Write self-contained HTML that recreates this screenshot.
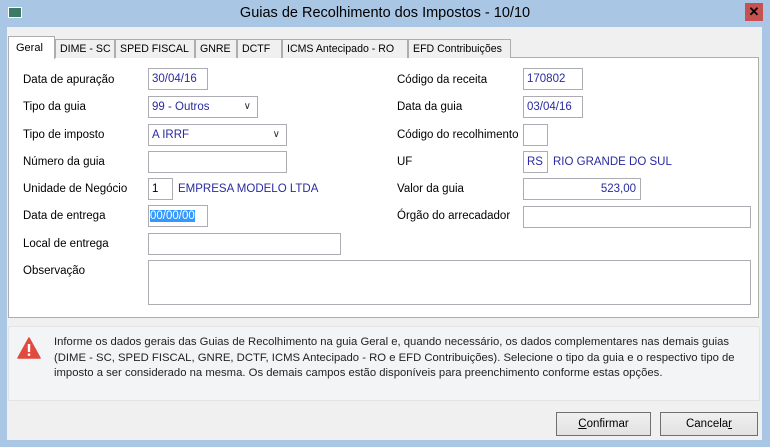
<!DOCTYPE html>
<html><head><meta charset="utf-8"><style>
*{margin:0;padding:0;box-sizing:border-box}
body{width:770px;height:447px;overflow:hidden;background:#a9c6e4;font-family:"Liberation Sans",sans-serif;font-size:11.5px;color:#000;position:relative}
.a{position:absolute;white-space:nowrap}
#body{position:absolute;left:7px;top:27px;width:755px;height:413px;background:#f0f0f0}
.tab{position:absolute;top:39px;height:19px;border:1px solid #adadad;border-bottom:none;background:#f0f0f0;font-size:10.6px;padding:3px 0 0 4px;white-space:nowrap;overflow:hidden}
#panel{position:absolute;left:8px;top:57px;width:751px;height:261px;background:#fff;border:1px solid #adadad}
.in{position:absolute;height:22px;border:1px solid #abadb3;background:#fff;color:#2a2aa0;padding:4px 0 0 3px;font-size:11.5px;white-space:nowrap}
.lb{position:absolute;font-size:11.5px;white-space:nowrap}
.blue{color:#2a2aa0}
.btn{position:absolute;top:412px;height:24px;border:1px solid #707070;background:linear-gradient(#f0f0f0,#e2e2e2);text-align:center;padding-top:5px;font-size:11.5px}
.dd{position:absolute;right:6px;top:4px;font-size:10px;color:#333}
</style></head><body>
<div class="a" style="left:8px;top:7px;width:14px;height:11px;background:#3d7a63;border:1px solid #fff"></div>
<div class="a" style="left:0;top:5px;width:770px;text-align:center;font-size:14.5px;color:#000">Guias de Recolhimento dos Impostos - 10/10</div>
<div class="a" style="left:745px;top:3px;width:18px;height:18px;background:#c75050;color:#000;font-weight:bold;font-size:13px;text-align:center;line-height:17px">✕</div>
<div id="body"></div>
<div id="panel"></div>
<div class="tab" style="left:55px;width:60px">DIME - SC</div>
<div class="tab" style="left:115px;width:80px">SPED FISCAL</div>
<div class="tab" style="left:195px;width:42px">GNRE</div>
<div class="tab" style="left:237px;width:45px">DCTF</div>
<div class="tab" style="left:282px;width:126px">ICMS Antecipado - RO</div>
<div class="tab" style="left:408px;width:103px">EFD Contribuições</div>
<div class="tab" style="left:8px;top:36px;height:23px;width:47px;background:#fff;padding:5px 0 0 7px;font-size:11px">Geral</div>

<div class="lb" style="left:23px;top:74px">Data de apuração</div>
<div class="in" style="left:148px;top:68px;width:60px">30/04/16</div>
<div class="lb" style="left:23px;top:101px">Tipo da guia</div>
<div class="in" style="left:148px;top:96px;width:110px">99 - Outros<span class="dd">&#8744;</span></div>
<div class="lb" style="left:23px;top:129px">Tipo de imposto</div>
<div class="in" style="left:148px;top:124px;width:139px">A IRRF<span class="dd">&#8744;</span></div>
<div class="lb" style="left:23px;top:156px">Número da guia</div>
<div class="in" style="left:148px;top:151px;width:139px"></div>
<div class="lb" style="left:23px;top:183px">Unidade de Negócio</div>
<div class="in" style="left:148px;top:178px;width:25px;color:#000">1</div>
<div class="lb blue" style="left:178px;top:183px">EMPRESA MODELO LTDA</div>
<div class="lb" style="left:23px;top:210px">Data de entrega</div>
<div class="in" style="left:148px;top:205px;width:60px;padding-left:1px"><span style="background:#3399ff;color:#fff">00/00/00</span></div>
<div class="lb" style="left:23px;top:238px">Local de entrega</div>
<div class="in" style="left:148px;top:233px;width:193px"></div>
<div class="lb" style="left:23px;top:265px">Observação</div>
<div class="in" style="left:148px;top:260px;width:603px;height:45px"></div>

<div class="lb" style="left:397px;top:74px">Código da receita</div>
<div class="in" style="left:523px;top:68px;width:60px">170802</div>
<div class="lb" style="left:397px;top:101px">Data da guia</div>
<div class="in" style="left:523px;top:96px;width:60px">03/04/16</div>
<div class="lb" style="left:397px;top:129px">Código do recolhimento</div>
<div class="in" style="left:523px;top:124px;width:25px"></div>
<div class="lb" style="left:397px;top:156px">UF</div>
<div class="in" style="left:523px;top:151px;width:25px">RS</div>
<div class="lb blue" style="left:553px;top:156px">RIO GRANDE DO SUL</div>
<div class="lb" style="left:397px;top:183px">Valor da guia</div>
<div class="in" style="left:523px;top:178px;width:118px;text-align:right;padding-right:4px">523,00</div>
<div class="lb" style="left:397px;top:210px">Órgão do arrecadador</div>
<div class="in" style="left:523px;top:206px;width:228px"></div>

<div class="a" style="left:8px;top:326px;width:752px;height:75px;background:#f3f4f6;border:1px solid #e3e3e3;border-radius:2px"></div>
<svg class="a" style="left:17px;top:337px" width="24" height="22" viewBox="0 0 24 22"><path d="M12 1 L23 21 L1 21 Z" fill="#e04a3f" stroke="#e04a3f" stroke-linejoin="round" stroke-width="1.5"/><rect x="10.8" y="7" width="2.4" height="8" fill="#fff"/><rect x="10.8" y="16.5" width="2.4" height="2.4" fill="#fff"/></svg>
<div class="a" style="left:54px;top:335px;font-size:11.3px;line-height:15.5px;color:#222">Informe os dados gerais das Guias de Recolhimento na guia Geral e, quando necessário, os dados complementares nas demais guias<br>(DIME - SC, SPED FISCAL, GNRE, DCTF, ICMS Antecipado - RO e EFD Contribuições). Selecione o tipo da guia e o respectivo tipo de<br>imposto a ser considerado na mesma. Os demais campos estão disponíveis para preenchimento conforme estas opções.</div>

<div class="btn" style="left:556px;width:95px"><u>C</u>onfirmar</div>
<div class="btn" style="left:660px;width:98px">Cancela<u>r</u></div>
</body></html>
